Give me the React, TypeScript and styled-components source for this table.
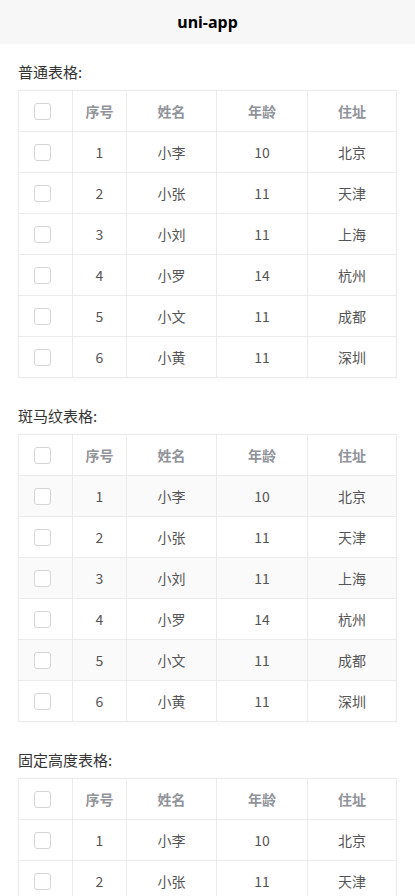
import React from "react";
import styled, { createGlobalStyle } from "styled-components";

const GlobalStyle = createGlobalStyle`
  html, body {
    margin: 0;
    padding: 0;
    background: #ffffff;
    font-family: "Noto Sans CJK SC", "Noto Sans", sans-serif;
  }
  * { box-sizing: border-box; }
`;

const NavBar = styled.div`
  height: 44px;
  background-color: #f7f7f7;
  display: flex;
  align-items: center;
  justify-content: center;
  font-size: 16px;
  font-weight: 700;
  color: #000;
  font-family: "Noto Sans", "Noto Sans CJK SC", sans-serif;
`;

const Page = styled.div`
  padding: 18px 18px 0 18px;
  display: flex;
  flex-direction: column;
`;

const Section = styled.div`
  display: flex;
  flex-direction: column;
  margin-bottom: 28px;
`;

const SectionTitle = styled.div`
  font-size: 15px;
  color: #333;
  line-height: 20px;
  margin-bottom: 8px;
`;

const Table = styled.div`
  width: 379px;
  border: 1px solid #ebebeb;
  box-shadow: 0 0 3px rgba(0, 0, 0, 0.04);
`;

const Row = styled.div<{ $striped?: boolean }>`
  display: grid;
  grid-template-columns: 54px 54px 90px 91px 1fr;
  height: 41px;
  border-bottom: 1px solid #ebebeb;
  background-color: ${(p) => (p.$striped ? "#fafafa" : "#fff")};
  &:last-child {
    border-bottom: none;
    height: 40px;
  }
`;

const Cell = styled.div<{ $head?: boolean }>`
  display: flex;
  align-items: center;
  justify-content: center;
  border-right: 1px solid #ebebeb;
  font-size: 14px;
  color: ${(p) => (p.$head ? "#909399" : "#555")};
  font-weight: ${(p) => (p.$head ? 700 : 400)};
  &:last-child {
    border-right: none;
  }
`;

const CheckCell = styled(Cell)`
  justify-content: flex-start;
  padding-left: 15px;
`;

const Check = styled.span`
  width: 17px;
  height: 17px;
  border: 1px solid #d5d5d5;
  border-radius: 3px;
  background: #fff;
`;

const data = [
  { name: "小李", age: 10, addr: "北京" },
  { name: "小张", age: 11, addr: "天津" },
  { name: "小刘", age: 11, addr: "上海" },
  { name: "小罗", age: 14, addr: "杭州" },
  { name: "小文", age: 11, addr: "成都" },
  { name: "小黄", age: 11, addr: "深圳" },
];

const DataTable: React.FC<{ striped?: boolean; rows?: number }> = ({
  striped,
  rows,
}) => {
  const list = rows ? data.slice(0, rows) : data;
  return (
    <Table>
      <Row>
        <CheckCell $head>
          <Check />
        </CheckCell>
        <Cell $head>序号</Cell>
        <Cell $head>姓名</Cell>
        <Cell $head>年龄</Cell>
        <Cell $head>住址</Cell>
      </Row>
      {list.map((d, i) => (
        <Row key={i} $striped={striped && i % 2 === 0}>
          <CheckCell>
            <Check />
          </CheckCell>
          <Cell>{i + 1}</Cell>
          <Cell>{d.name}</Cell>
          <Cell>{d.age}</Cell>
          <Cell>{d.addr}</Cell>
        </Row>
      ))}
    </Table>
  );
};

export default function App() {
  return (
    <>
      <GlobalStyle />
      <NavBar>uni-app</NavBar>
      <Page>
        <Section>
          <SectionTitle>普通表格:</SectionTitle>
          <DataTable />
        </Section>
        <Section>
          <SectionTitle>斑马纹表格:</SectionTitle>
          <DataTable striped />
        </Section>
        <Section>
          <SectionTitle>固定高度表格:</SectionTitle>
          <DataTable rows={3} />
        </Section>
      </Page>
    </>
  );
}
